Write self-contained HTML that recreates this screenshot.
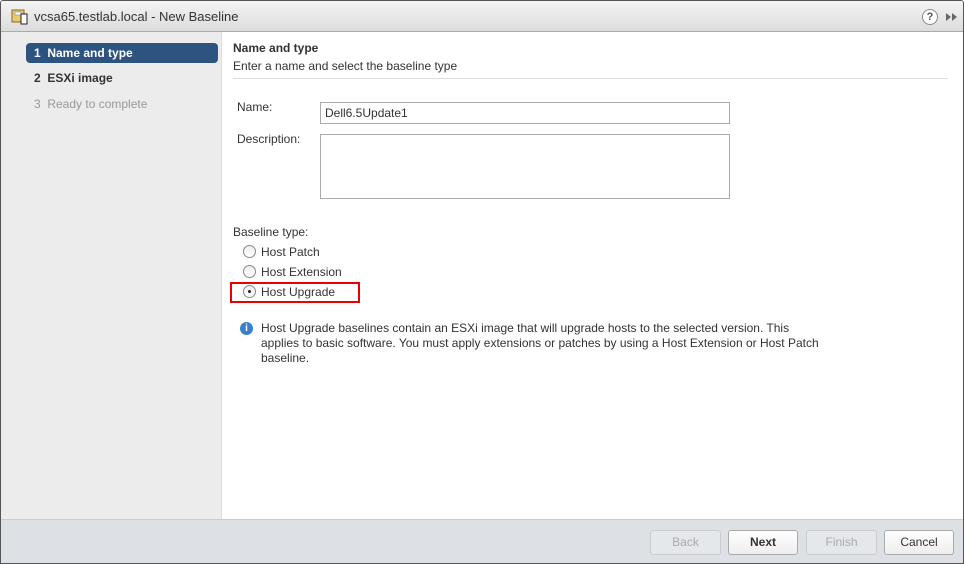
<!DOCTYPE html><html><head><style>
*{margin:0;padding:0;box-sizing:border-box}
body{width:964px;height:564px;overflow:hidden;font-family:"Liberation Sans",Arial,sans-serif;font-size:12px;color:#333;background:#fff}
.frame{position:absolute;left:0;top:0;width:964px;height:564px;border:1px solid #555;border-radius:3px 3px 0 0;overflow:hidden}
.title{position:absolute;left:0;top:0;width:962px;height:31px;background:linear-gradient(#f4f4f4,#dcdcdc);border-bottom:1px solid #aaa}
.title span{position:absolute;left:33px;top:8px;font-size:13px;color:#333}
.left{position:absolute;left:0;top:31px;width:221px;height:487px;background:#ececec;border-right:1px solid #ddd}
.step{position:absolute;left:25px;width:192px;height:20px;line-height:20px;padding-left:8px;font-weight:bold;font-size:12px}
.right{position:absolute;left:222px;top:31px;width:740px;height:487px;background:#fff}
.abs{position:absolute}
.inp{position:absolute;border:1px solid #aaa;background:#fff}
.foot{position:absolute;left:0;top:518px;width:962px;height:45px;background:#dde1e6;border-top:1px solid #ccc}
.btn{position:absolute;top:10px;height:25px;border:1px solid #aaa;border-radius:3px;background:linear-gradient(#fff,#eee);text-align:center;line-height:23px;font-size:12px}
.dis{color:#aaa;border-color:#ccc;background:#e4e7eb}
.radio{position:absolute;width:13px;height:13px;border:1px solid #888;border-radius:50%;background:linear-gradient(#eee,#fff)}
</style></head><body><div class="frame">
<div class="title">
<svg class="abs" style="left:10px;top:7px" width="17" height="17"><rect x="1" y="2" width="12" height="12" fill="#e8c870" stroke="#8a6a20"/><rect x="4" y="4" width="6" height="3" fill="#fff" stroke="#777" stroke-width=".5"/><rect x="10" y="6" width="6" height="10" fill="#fff" stroke="#222"/></svg>
<span>vcsa65.testlab.local - New Baseline</span>
<div class="abs" style="left:921px;top:8px;width:16px;height:16px;border:1px solid #888;border-radius:50%;background:#fff;text-align:center;line-height:14px;font-weight:bold;font-size:11px;color:#555">?</div>
<svg class="abs" style="left:944px;top:11px" width="14" height="10"><path d="M1 1L6 5L1 9Z M7 1L12 5L7 9Z" fill="#666"/></svg>
</div>
<div class="left">
<div class="step" style="top:11px;background:#2d5480;color:#fff;border-radius:4px">1&nbsp; Name and type</div>
<div class="step" style="top:36px;color:#333">2&nbsp; ESXi image</div>
<div class="step" style="top:62px;color:#999;font-weight:normal">3&nbsp; Ready to complete</div>
</div>
<div class="right">
<div class="abs" style="left:10px;top:9px;font-weight:bold;color:#333">Name and type</div>
<div class="abs" style="left:10px;top:27px;color:#333">Enter a name and select the baseline type</div>
<div class="abs" style="left:10px;top:46px;width:715px;height:1px;background:#ddd"></div>
<div class="abs" style="left:14px;top:68px">Name:</div>
<div class="inp" style="left:97px;top:70px;width:410px;height:22px;padding:3px 4px">Dell6.5Update1</div>
<div class="abs" style="left:14px;top:100px">Description:</div>
<div class="inp" style="left:97px;top:102px;width:410px;height:65px"></div>
<div class="abs" style="left:10px;top:193px">Baseline type:</div>
<div class="radio" style="left:20px;top:213px"></div><div class="abs" style="left:38px;top:213px">Host Patch</div>
<div class="radio" style="left:20px;top:233px"></div><div class="abs" style="left:38px;top:233px">Host Extension</div>
<div class="radio" style="left:20px;top:253px"><div style="position:absolute;left:4px;top:4px;width:3px;height:3px;background:#222;border-radius:50%"></div></div><div class="abs" style="left:38px;top:253px">Host Upgrade</div>
<div class="abs" style="left:7px;top:250px;width:130px;height:21px;border:2px solid #e00"></div>
<div class="abs" style="left:17px;top:290px;width:13px;height:13px;border-radius:50%;background:#3a7fc8;color:#fff;font-weight:bold;font-size:10px;text-align:center;line-height:13px">i</div>
<div class="abs" style="left:38px;top:289px;line-height:15px;white-space:nowrap">Host Upgrade baselines contain an ESXi image that will upgrade hosts to the selected version. This<br>applies to basic software. You must apply extensions or patches by using a Host Extension or Host Patch<br>baseline.</div>
</div>
<div class="foot">
<div class="btn dis" style="left:649px;width:71px">Back</div>
<div class="btn" style="left:727px;width:70px;font-weight:bold">Next</div>
<div class="btn dis" style="left:805px;width:71px">Finish</div>
<div class="btn" style="left:883px;width:70px">Cancel</div>
</div>
</div></body></html>
